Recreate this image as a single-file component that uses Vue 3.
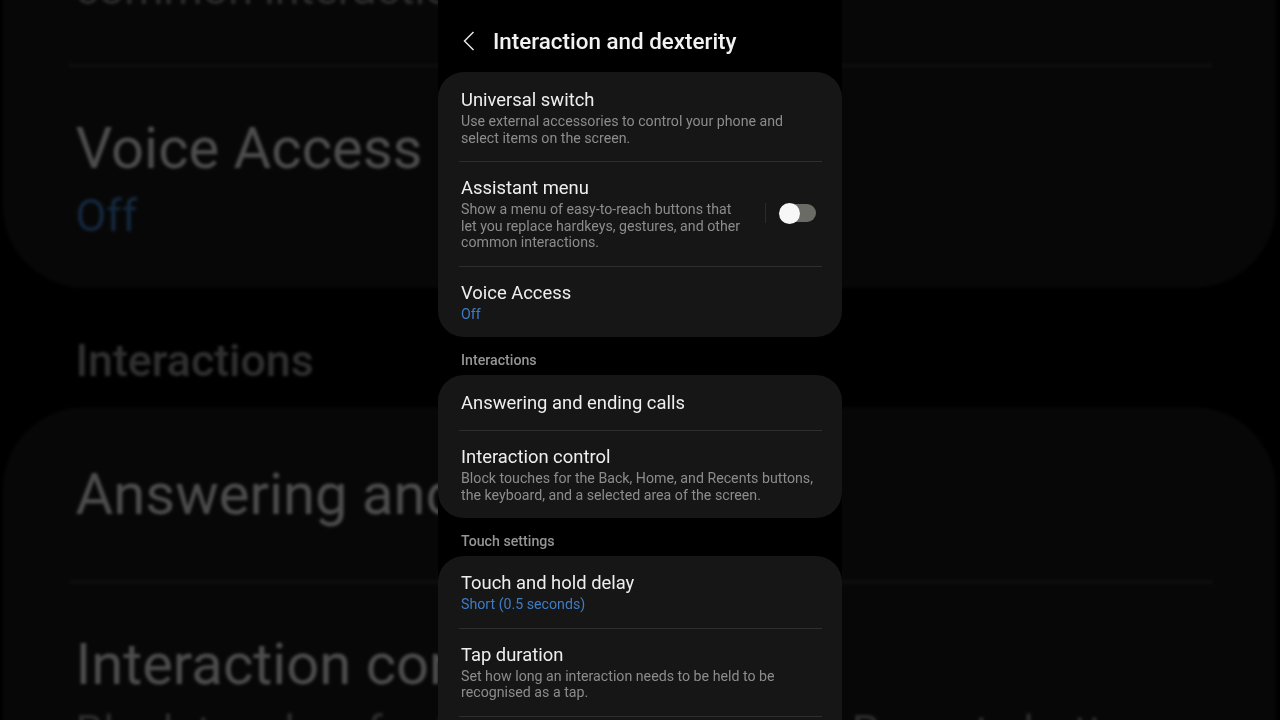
<script setup>
const layers = ['backdrop', 'phone']
const groups = [
  {
    items: [
      { title: 'Universal switch', lines: ['Use external accessories to control your phone and', 'select items on the screen.'] },
      { title: 'Assistant menu', lines: ['Show a menu of easy-to-reach buttons that', 'let you replace hardkeys, gestures, and other', 'common interactions.'], toggle: true },
      { title: 'Voice Access', value: 'Off' }
    ]
  },
  {
    label: 'Interactions',
    items: [
      { title: 'Answering and ending calls', single: true },
      { title: 'Interaction control', lines: ['Block touches for the Back, Home, and Recents buttons,', 'the keyboard, and a selected area of the screen.'] }
    ]
  },
  {
    label: 'Touch settings',
    open: true,
    items: [
      { title: 'Touch and hold delay', value: 'Short (0.5 seconds)' },
      { title: 'Tap duration', lines: ['Set how long an interaction needs to be held to be', 'recognised as a tap.'] }
    ]
  }
]
</script>

<template>
  <main class="stage">
    <div v-for="layer in layers" :key="layer" :class="layer" :aria-hidden="layer === 'backdrop'">
      <header class="bar">
        <svg class="back" width="12" height="20" viewBox="0 0 12 20" fill="none">
          <path d="M10.5 1 L1.5 10 L10.5 19" stroke="#e6e6e6" stroke-width="1.5" />
        </svg>
        <h1 class="heading">Interaction and dexterity</h1>
      </header>
      <section v-for="(group, g) in groups" :key="g">
        <h2 v-if="group.label" class="label">{{ group.label }}</h2>
        <div class="card" :class="{ open: group.open }">
          <div v-for="item in group.items" :key="item.title" class="row" :class="{ single: item.single }">
            <div class="text">
              <div class="title">{{ item.title }}</div>
              <div v-if="item.value" class="value">{{ item.value }}</div>
              <div v-for="line in item.lines" :key="line" class="sub">{{ line }}</div>
            </div>
            <div v-if="item.toggle" class="control">
              <span class="rule"></span>
              <span class="track"><span class="thumb"></span></span>
            </div>
          </div>
        </div>
      </section>
    </div>
  </main>
</template>

<style>
html, body { margin: 0; background: #000; }
</style>

<style scoped>
.stage {
  position: relative;
  width: 1280px;
  height: 720px;
  overflow: hidden;
  background: #000;
  display: flex;
  justify-content: center;
  font-family: Roboto, "Liberation Sans", sans-serif;
}
.phone, .backdrop {
  width: 404px;
  flex: none;
  background: #000;
  box-sizing: border-box;
}
.phone {
  position: relative;
  height: 720px;
  overflow: hidden;
  filter: blur(0.4px);
}
.backdrop {
  position: absolute;
  left: 2.5px;
  top: -774px;
  transform: scale(3.15);
  transform-origin: 0 0;
  filter: blur(0.55px) brightness(0.32);
}
.bar {
  height: 72px;
  display: flex;
  align-items: center;
  padding: 10px 0 0 25px;
  box-sizing: border-box;
  gap: 18px;
}
.back { flex: none; }
.heading {
  margin: 0;
  font-size: 22.4px;
  font-weight: 500;
  color: #f2f2f2;
  white-space: nowrap;
}
.label {
  margin: 0;
  height: 38px;
  padding-left: 23px;
  font-size: 14.2px;
  line-height: 47px;
  font-weight: 500;
  color: #959595;
}
.card {
  background: #161616;
  border-radius: 26px;
  padding: 2px 20px 0 21px;
  overflow: hidden;
}
.card.open {
  padding-top: 1px;
  padding-bottom: 60px;
  border-radius: 26px 26px 0 0;
}
.row {
  display: flex;
  align-items: center;
  padding: 14px 0 15px 2px;
  border-bottom: 1px solid #2e2e2e;
}
.card:not(.open) .row:last-child { border-bottom: 0; }
.text { flex: 1; min-width: 0; }
.title {
  font-size: 18.4px;
  line-height: 24px;
  color: #eeeeee;
  margin-bottom: 1px;
  white-space: nowrap;
}
.single .title { margin-bottom: 0; }
.sub {
  font-size: 14.2px;
  line-height: 16.5px;
  color: #8c8c8c;
  white-space: nowrap;
}
.value {
  font-size: 14.2px;
  line-height: 16.5px;
  color: #3f7cc4;
}
.control {
  display: flex;
  align-items: center;
  gap: 14px;
  flex: none;
  padding-right: 6px;
}
.rule {
  width: 1px;
  height: 20px;
  background: #2a2a2a;
}
.track {
  display: block;
  position: relative;
  width: 36px;
  height: 18px;
  border-radius: 9px;
  background: #6b6b65;
}
.thumb {
  position: absolute;
  left: -1px;
  top: -1.5px;
  width: 21px;
  height: 21px;
  border-radius: 50%;
  background: #f7f7f7;
}
</style>
